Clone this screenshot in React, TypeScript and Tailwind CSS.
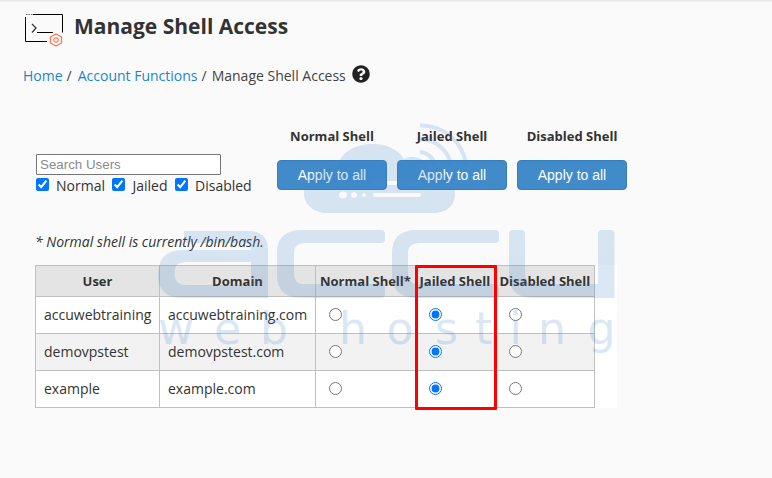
import { FaQuestionCircle } from 'react-icons/fa';

const filters = ['Normal', 'Jailed', 'Disabled'];
const shells = ['Normal Shell', 'Jailed Shell', 'Disabled Shell'];

const accounts = [
    { user: 'accuwebtraining', domain: 'accuwebtraining.com', shell: 'Jailed Shell' },
    { user: 'demovpstest', domain: 'demovpstest.com', shell: 'Jailed Shell' },
    { user: 'example', domain: 'example.com', shell: 'Jailed Shell' },
];

function ShellIcon() {
    return (
        <svg className="h-[34px] w-[40px]" viewBox="0 0 40 34" fill="none">
            <path d="M9 1.500H38.500V19.500M1.500 4V28.500H23" stroke="#000" />
            <path d="M2 1.500H9" stroke="#000" strokeOpacity="0.6" strokeDasharray="1.500 1" />
            <path d="M8 11L12 15L8 19.500" stroke="#333" strokeWidth="1.200" />
            <path d="M13 19.500H29" stroke="#000" />
            <path
                d="M32 21L37.500 24V30L32 33L26.500 30V24Z"
                stroke="#f4775a"
                strokeWidth="1.300"
                strokeLinejoin="round"
            />
            <circle cx="32" cy="27" r="2.200" stroke="#f08a62" strokeWidth="1.200" />
        </svg>
    );
}

function Watermark() {
    return (
        <svg
            className="pointer-events-none absolute top-0 left-0 h-[478px] w-[772px]"
            viewBox="0 0 772 478"
            fill="none"
            aria-hidden="true"
        >
            <g opacity="0.18">
                {/* Cloud with the server lights cut out */}
                <path
                    fillRule="evenodd"
                    fill="#377fcd"
                    d="M324 213C311 211 304 203 304 193C304 178 316 168 337 167C340 153 355 144 372 144C388 144 398 150 404 159C415 154 427 159 429 170C445 171 455 180 455 194C455 206 446 213 433 213Z
                    M339 195a4 3.500 0 1 0 8 0a4 3.500 0 1 0 -8 0Z
                    M351 195a3 2.700 0 1 0 6 0a3 2.700 0 1 0 -6 0Z
                    M362 195a2 2 0 1 0 4 0a2 2 0 1 0 -4 0Z
                    M375 193H419a2 2 0 0 1 0 4H375a2 2 0 0 1 0 -4Z
                    M339 183a4 3 0 1 0 8 0a4 3 0 1 0 -8 0Z
                    M351 183a3 2.500 0 1 0 6 0a3 2.500 0 1 0 -6 0Z
                    M375 181H419a2 2 0 0 1 0 4H375a2 2 0 0 1 0 -4Z"
                />
                <g stroke="#377fcd" strokeWidth="4">
                    <path d="M420 125.500A45 45 0 0 1 466 165" />
                    <path d="M420 139A32 32 0 0 1 451 165" />
                    <path d="M420 152A17 17 0 0 1 435 165" />
                </g>
                {/* Wide rounded lettering */}
                <g fill="#377fcd" fillRule="evenodd">
                    <path d="M184 231H248Q268 231 268 250V298H183Q158 298 158 275Q158 250 183 250H251Q251 243 243 243H188Q184 243 184 239ZM186 262Q174.500 262 174.500 273Q174.500 285 186 285H251V262Z" />
                    <path d="M302 230H381Q385 230 385 234V239Q385 243 381 243H306Q294 243 294 253V274Q294 284 304 284H381Q385 284 385 288V294Q385 298 381 298H302Q277 298 277 275V253Q277 230 302 230Z" />
                    <path d="M417 230H495Q499 230 499 234V239Q499 243 495 243H420Q408 243 408 253V274Q408 284 418 284H495Q499 284 499 288V294Q499 298 495 298H417Q392 298 392 275V253Q392 230 417 230Z" />
                    <path d="M513 230H521Q525 230 525 234V274Q525 284 535 284H598V234Q598 230 602 230H610.500Q614.500 230 614.500 234V298H534Q509 298 509 275V234Q509 230 513 230Z" />
                </g>
                <text
                    x="158 214 260 300 339 386.500 435 475 509.500 538 587.500"
                    y="343.500"
                    fill="#377fcd"
                    className="font-['DejaVu_Sans',sans-serif] text-[44px]"
                >
                    web hosting
                </text>
            </g>
        </svg>
    );
}

export default function App() {
    return (
        <div className="relative h-[478px] w-[772px] overflow-hidden bg-[#fafafa] font-['Open_Sans',sans-serif] text-sm text-[#333]">
            <div className="h-[3px] bg-linear-to-b from-[#e6e6e6] to-[#fafafa]" />
            <header className="flex h-[49px] pl-6">
                <div className="mt-[10px] mr-[10px]">
                    <ShellIcon />
                </div>
                <h1 className="mt-[8px] text-[21px] leading-[30px] font-bold">Manage Shell Access</h1>
            </header>
            <nav className="mt-[14px] flex h-5 items-center pl-[23px] text-sm text-[#444]">
                <a className="text-[#1b87c9]">Home</a>
                <span className="mx-1">/</span>
                <a className="ml-[2px] text-[#1b87c9]">Account Functions</a>
                <span className="mx-1">/</span>
                <span className="ml-[1px]">Manage Shell Access</span>
                <FaQuestionCircle className="mb-1 ml-[6px] size-[18px] text-[#222]" />
            </nav>

            <section className="mt-[39px] flex h-[80px] pl-9">
                <div className="w-[241px] pt-[29px]">
                    <input
                        className="block h-[21px] w-[185px] rounded-[1px] border border-[#767676] bg-white px-[3px] font-['Liberation_Sans',sans-serif] text-[13.333px] placeholder:text-[#8a8a8a]"
                        placeholder="Search Users"
                    />
                    <div className="mt-px flex h-5 items-center">
                        {filters.map((name) => (
                            <label key={name} className="mr-[7.500px] flex items-center">
                                <input type="checkbox" defaultChecked className="mr-[7px] mb-[3px] size-[13px]" />
                                {name}
                            </label>
                        ))}
                    </div>
                </div>
                <div className="flex gap-[10px]">
                    {shells.map((name) => (
                        <div key={name} className="w-[110px] text-center">
                            <div className="text-[13px] leading-[22px] font-bold">{name}</div>
                            <button className="mt-[13px] h-[30px] w-[110px] rounded border border-[#357ebd] bg-[#428bca] font-['Liberation_Sans',sans-serif] text-sm text-white">
                                Apply to all
                            </button>
                        </div>
                    ))}
                </div>
            </section>
            <p className="mt-[27px] pl-[35px] leading-5 italic">* Normal shell is currently /bin/bash.</p>

            <div className="mt-[13px] ml-[35px] w-[582px] bg-white">
                <table className="w-[559px] table-fixed border-collapse border border-[#c0c0c0]">
                    <colgroup>
                        <col className="w-[124px]" />
                        <col className="w-[156px]" />
                        <col className="w-[100px]" />
                        <col className="w-[80px]" />
                        <col className="w-[99px]" />
                    </colgroup>
                    <thead>
                        <tr className="h-[31px] bg-[#e4e4e4] text-[13px]">
                            <th className="border border-[#c0c0c0]">User</th>
                            <th className="border border-[#c0c0c0]">Domain</th>
                            {shells.map((name) => (
                                <th key={name} className="pl-1 text-left whitespace-nowrap">
                                    {name === 'Normal Shell' ? `${name}*` : name}
                                </th>
                            ))}
                        </tr>
                    </thead>
                    <tbody>
                        {accounts.map((account) => (
                            <tr key={account.user} className="h-[37px] border border-[#c0c0c0] even:bg-[#f2f2f2]">
                                <td className="border border-[#c0c0c0] px-2">{account.user}</td>
                                <td className="border border-[#c0c0c0] px-2">{account.domain}</td>
                                {shells.map((name) => (
                                    <td key={name} className="pb-[2px] pl-[13px]">
                                        <input
                                            type="radio"
                                            name={account.user}
                                            defaultChecked={name === account.shell}
                                            className="block size-[13px]"
                                        />
                                    </td>
                                ))}
                            </tr>
                        ))}
                    </tbody>
                </table>
            </div>

            <Watermark />
            {/* Highlight around the jailed shell column */}
            <div className="absolute top-[265px] left-[415px] h-[145px] w-[82px] rounded-[1px] border-[3px] border-[#f00]" />
        </div>
    );
}
